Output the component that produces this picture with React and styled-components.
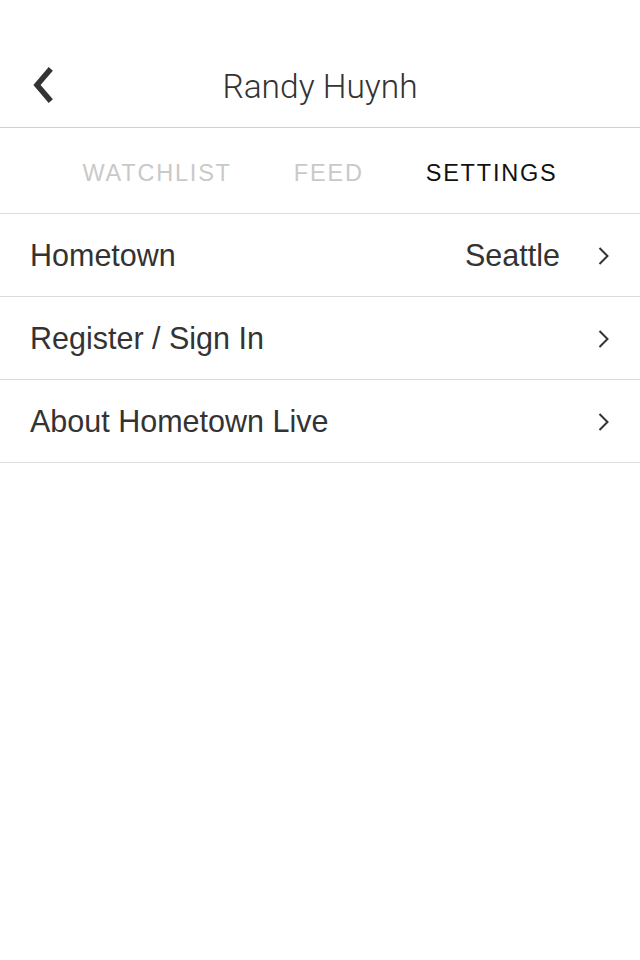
import React from 'react';
import styled, { createGlobalStyle } from 'styled-components';

const GlobalStyle = createGlobalStyle`
	html, body {
		margin: 0;
		padding: 0;
		background: #ffffff;
	}

	body {
		font-family: "Liberation Sans", Arial, sans-serif;
		color: #333333;
	}
`;

const Screen = styled.div`
	display: flex;
	flex-direction: column;

	width: 640px;
	min-height: 960px;
	background: #ffffff;
`;

const Header = styled.header`
	display: flex;
	align-items: center;
	justify-content: center;
	position: relative;

	height: 81px;
	padding-top: 46px;
	border-bottom: 1px solid #cfcfcf;
`;

const BackButton = styled.button`
	position: absolute;
	left: 30px;
	top: 67px;

	display: flex;
	padding: 0;
	border: none;
	background: none;
	cursor: pointer;
`;

const Title = styled.h1`
	margin: 0;

	font-family: Roboto, "Liberation Sans", sans-serif;
	font-weight: 300;
	font-size: 33.5px;
	color: #333333;
`;

const Tabs = styled.nav`
	display: flex;
	align-items: center;
	justify-content: center;
	gap: 62px;

	height: 80px;
	padding-top: 5px;
	border-bottom: 1px solid #dcdcdc;
`;

const Tab = styled.span`
	font-size: 23.5px;
	letter-spacing: 1.8px;
	color: ${props => (props.active ? '#111111' : '#c9c9c9')};
	cursor: pointer;
`;

const List = styled.ul`
	margin: 0;
	padding: 0;
	list-style: none;
`;

const Row = styled.li`
	display: flex;
	align-items: center;

	height: 81px;
	padding: 1px 30px 0;
	border-bottom: 1px solid #dcdcdc;

	font-size: 30.5px;
	color: #333333;
	cursor: pointer;
`;

const Label = styled.span`
	flex: 1;
`;

const Value = styled.span`
	margin-right: 38px;
`;

const Chevron = () => (
	<svg width="12" height="20" viewBox="0 0 12 20">
		<path d="M1.5 2 L9.5 10 L1.5 18" fill="none" stroke="#333" strokeWidth="2" />
	</svg>
);

const BackIcon = () => (
	<svg width="26" height="36" viewBox="0 0 26 36">
		<path d="M19 4 L7 18 L19 32" fill="none" stroke="#333" strokeWidth="5.5" strokeLinecap="square" />
	</svg>
);

const rows = [
	{ label: 'Hometown', value: 'Seattle' },
	{ label: 'Register / Sign In' },
	{ label: 'About Hometown Live' },
];

export default function App() {
	return (
		<Screen>
			<GlobalStyle />
			<Header>
				<BackButton>
					<BackIcon />
				</BackButton>
				<Title>Randy Huynh</Title>
			</Header>
			<Tabs>
				<Tab>WATCHLIST</Tab>
				<Tab>FEED</Tab>
				<Tab active>SETTINGS</Tab>
			</Tabs>
			<List>
				{rows.map(row => (
					<Row key={row.label}>
						<Label>{row.label}</Label>
						{row.value && <Value>{row.value}</Value>}
						<Chevron />
					</Row>
				))}
			</List>
		</Screen>
	);
}
